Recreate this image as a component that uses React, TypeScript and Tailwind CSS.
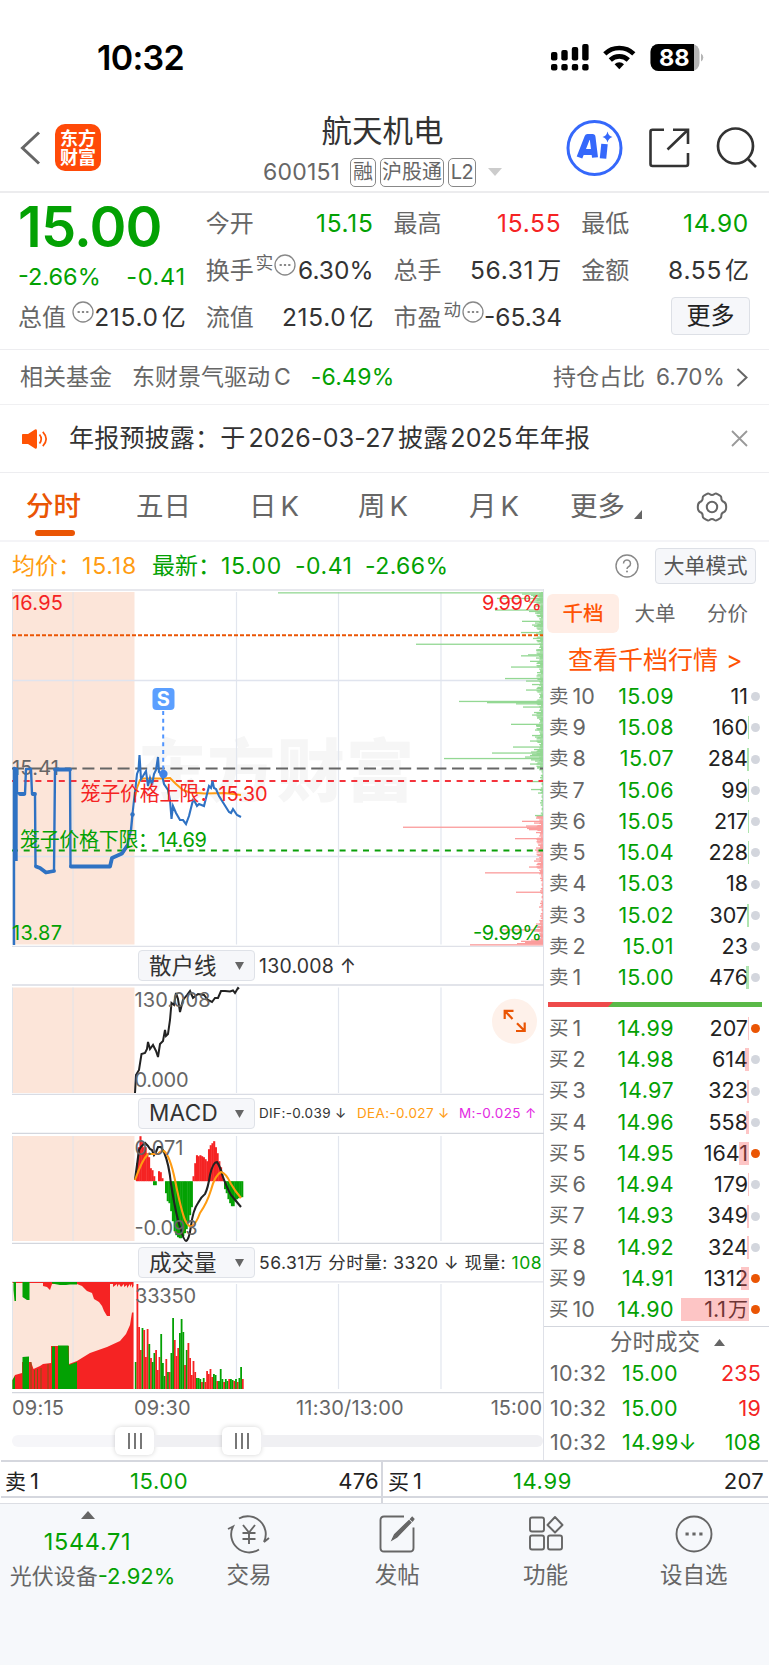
import { type ReactNode } from "react";
import clsx from "clsx";

type Side = "sell" | "buy";

interface Level {
    label: string;
    price: string;
    volume: string;
    bar: number;
    hot?: boolean;
}

const sells: Level[] = [
    { label: "10", price: "15.09", volume: "11", bar: 0 },
    { label: "9", price: "15.08", volume: "160", bar: 1 },
    { label: "8", price: "15.07", volume: "284", bar: 1.5 },
    { label: "7", price: "15.06", volume: "99", bar: 0.5 },
    { label: "6", price: "15.05", volume: "217", bar: 1 },
    { label: "5", price: "15.04", volume: "228", bar: 1 },
    { label: "4", price: "15.03", volume: "18", bar: 0 },
    { label: "3", price: "15.02", volume: "307", bar: 1.5 },
    { label: "2", price: "15.01", volume: "23", bar: 0 },
    { label: "1", price: "15.00", volume: "476", bar: 3 },
];

const buys: Level[] = [
    { label: "1", price: "14.99", volume: "207", bar: 1, hot: true },
    { label: "2", price: "14.98", volume: "614", bar: 4 },
    { label: "3", price: "14.97", volume: "323", bar: 2 },
    { label: "4", price: "14.96", volume: "558", bar: 3 },
    { label: "5", price: "14.95", volume: "1641", bar: 10, hot: true },
    { label: "6", price: "14.94", volume: "179", bar: 1 },
    { label: "7", price: "14.93", volume: "349", bar: 2 },
    { label: "8", price: "14.92", volume: "324", bar: 2 },
    { label: "9", price: "14.91", volume: "1312", bar: 8, hot: true },
    { label: "10", price: "14.90", volume: "1.1万", bar: 68, hot: true },
];

// [y, length] of the larger resting orders
const bigOrders: [number, number][] = [
    [592.8, 265], [594, 21], [595.2, 12], [596.4, 10], [598.4, 46], [600, 10], [602, 14], [606, 8], [610, 48], [611.4, 14], [613, 8],
    [621.3, 21], [623, 8], [625, 11], [626.2, 9], [632.5, 22], [634, 7], [638.4, 10], [644.2, 127], [650, 7], [654.8, 15], [655.8, 22],
    [658, 7], [661.3, 13], [667, 32], [672.6, 6], [678.5, 38], [681, 17], [684.5, 11], [690, 17], [701.4, 84], [702.6, 56], [703.8, 27],
    [707, 20], [712.5, 9], [715, 11], [718, 6], [724.3, 32], [725.6, 7], [730, 8], [735.5, 11], [737, 8], [741, 13], [747, 30], [749.5, 9],
    [752, 12], [753, 51], [754.2, 11], [755.5, 13], [757, 18], [758.5, 99], [759.8, 12], [761, 8], [764, 13], [768, 6], [781.5, 16],
    [789.5, 12], [793, 5], [815.5, 8], [818, 7], [821.3, 21], [823, 9], [826, 17], [827.2, 140], [828.4, 16], [829.6, 14], [832.5, 7],
    [838.6, 28], [840, 6], [845, 5], [848, 7], [850, 8], [859, 7], [861, 9], [864.5, 5], [867, 14], [872.8, 58], [892.2, 27], [907, 4],
    [924, 7], [929.8, 43], [931, 9], [940, 12], [941.3, 22], [942.6, 18], [943.6, 26], [944.8, 73],
];

const macdBars: [number, number[]][] = [
    [136, [18, 34, 45, 40, 34, 34, 28, 24, 13, 11, 5]],
    [153, [-4, -4]],
    [158, [10, 9, 3]],
    [165, [-12, -20, -22, -30, -40, -50, -54, -56, -57, -57, -55, -52, -48, -42, -34, -26]],
    [192.5, [5, 18, 26, 25, 26, 25, 24, 22, 20, 32, 36, 38, 40, 34, 28, 20, 14, 5]],
    [224, [-8, -12, -18, -22, -25, -25, -20, -18, -17, -16, -16]],
];

const volumeBars =
    "g27 r105 r62 r39 g61 r59 r32 r60 g45 r31 g27 g36 r39 r19 r32 g55 g26 g13 r30 g17 r17 g36 g71 r49 r33 r41 g56 g70 g57 r24 g39 r46 r31 r14 r28 r17 g11 g11 g10 r7 g11 r7 r18 r15 r20 r12 g15 g14 r8 g8 g20 g10 r7 g10 g8 r10 g10 g9 r8 g10 r7 g11 g22 r10".split(" ");

const GRID_X = [236.5, 338.5, 441];
const RED = "#f52323";
const GREEN = "#03a103";

function Grid({ top, bottom, pre = true }: { top: number; bottom: number; pre?: boolean }) {
    return (
        <g>
            {pre && <rect x={12.5} y={top} width={122} height={bottom - top} fill="#fce5d9" />}
            <path d={`M12.5 ${top}V${bottom}M73 ${top}V${bottom}`} stroke="#e0e4ea" />
            {GRID_X.map((x) => (
                <path key={x} d={`M${x} ${top}V${bottom}`} stroke="#e2e6ee" strokeWidth={1.2} />
            ))}
        </g>
    );
}

function Label({ x, y, w, color = "#666", end, children }: { x: number; y: number; w: number; color?: string; end?: boolean; children: ReactNode }) {
    return (
        <text x={x} y={y} fontSize={20} fill={color} textLength={w} textAnchor={end ? "end" : "start"}>
            {children}
        </text>
    );
}

function PriceChart() {
    const filler = Array.from({ length: 308 }, (_, i) => {
        const y = 592.5 + i * 1.143;
        const calm = y > 770 && y < 815 || y > 875 && y < 920;
        const n = (i * 7919 + i * i * 31) % 11;
        return [y, calm ? 0.6 + (n % 4) * 0.8 : 2 + (n % 6) * 0.9] as [number, number];
    });

    return (
        <svg className="block h-[358px] w-[533px]" viewBox="11 589 533 358">
            <text x={138} y={796} fontSize={68} fontWeight={900} fill="#f6f6f6" textLength={276}>东方财富</text>
            <Grid top={592} bottom={944.5} />
            <path d="M12 590H544M12 946.5H544" stroke="#dfe1e8" strokeWidth={1.5} />
            <path d="M12 680.5H543M12 856.5H543" stroke="#e0e4ee" strokeWidth={1.4} />
            {[...filler, ...bigOrders].map(([y, len], i) => (
                <rect key={i} x={543 - len} y={y - 0.6} width={len} height={1.3} fill={y < 816 ? "#93d893" : "#fb9c9c"} />
            ))}
            <path d="M12 635.3H543" stroke="#ea5504" strokeWidth={2} strokeDasharray="4 2" />
            <Label x={12} y={775} w={47}>15.41</Label>
            <path d="M12 768.4H543" stroke="#666" strokeWidth={2} strokeDasharray="12 5.6" />
            <path d="M12 781H543" stroke="#f4333c" strokeWidth={2} strokeDasharray="6 5.7" />
            <path d="M12 850.5H543" stroke="#0a9f0a" strokeWidth={2} strokeDasharray="6 5.7" />
            <polyline
                points="135,797 137,788 140,780 143,778.5 163,778.5 170,778 176,784 183,790 190,792.5 205,793.5 225,793 241,795"
                fill="none" stroke="#ff9c12" strokeWidth={2}
            />
            <path d="M16.2 768V861" stroke="#2f72c3" strokeWidth={3} />
            <polyline
                points="14,945 14,768 17,769 17,793 25,794 26,769 31,769 32,794 35,795 35.5,866 40,868 46,872.5 54,871 55,769.5 70,769.5 70.5,866.5 110,866.5 112,858 116,856.5 122,853.5 127,846 131,830 132.5,814"
                fill="none" stroke="#2f72c3" strokeWidth={2.4} strokeLinejoin="round"
            />
            <path d="M20 794H24M33 794H35M55 769.5H70M36 866.5L40 868L46 872.5L54 871M71 866.5H110L112 858L122 853.5L127 846" fill="none" stroke="#2f72c3" strokeWidth={3.8} strokeLinecap="round" strokeLinejoin="round" />
            <polyline
                points="132.5,814 134,800 135.5,788 137,774 138.5,770 139.5,755 141,779 143,776 146,771 148,786 150,778 152,785 154,774 156,770 158,757 159,772 162,775 164,784 168,790 170,800 171.5,819 173,806 176,813 180,820 183,820 186,824 189,816 191,808 193,800 195,802 197,806 199,804 204,806 207,794 209,786 211,788 212.5,781 214,788 216,789 219,796 224,804 229,812 231,813 233,809 237,815 241,817"
                fill="none" stroke="#2f72c3" strokeWidth={2.1}
            />
            <circle cx={132.5} cy={814.5} r={2.2} fill="#2f72c3" />
            <path d="M163.2 711V770" stroke="#4f94ff" strokeWidth={2} strokeDasharray="4 3.8" />
            <circle cx={163.4} cy={774} r={4.2} fill="#3f83e8" />
            <rect x={152.5} y={688} width={22} height={22} rx={4} fill="#5b9fff" />
            <text x={163.4} y={706} fontSize={20} fontWeight={700} fill="#fff" textAnchor="middle">S</text>
            <Label x={12} y={609.5} w={51} color={RED}>16.95</Label>
            <Label x={542} y={609.5} w={60} color={RED} end>9.99%</Label>
            <Label x={12} y={939.5} w={50} color={GREEN}>13.87</Label>
            <Label x={542} y={939.5} w={69} color={GREEN} end>-9.99%</Label>
            <Label x={80.5} y={800.5} w={187} color={RED}>笼子价格上限：15.30</Label>
            <Label x={20} y={846.5} w={187} color={GREEN}>笼子价格下限：14.69</Label>
        </svg>
    );
}

function RetailChart() {
    return (
        <svg className="block h-[111px] w-[533px]" viewBox="11 984 533 111">
            <Grid top={987.5} bottom={1093} />
            <path d="M12 985H544M12 1094.5H544" stroke="#d9dce4" strokeWidth={1.4} />
            <polyline
                points="135,1093 136,1075 139,1070 141.5,1054 145,1053 147,1049 148,1042 150,1049 153,1045 156,1051 158,1057 160,1044 163,1041 165,1030 166,1036 168,1034 170,1020 171.5,1003 174,1005 176,993 178,999 180,1012 183,1000 187,995 190,991 193,998 198,994 204,995 208,1000 212,1002 215,998 218,998 221,991 225,991 230,991.5 233,990.5 235,993 238,988 239,989"
                fill="none" stroke="#222" strokeWidth={2}
            />
            <Label x={134.5} y={1006.5} w={76}>130.008</Label>
            <Label x={134.5} y={1086.5} w={54}>0.000</Label>
            <circle cx={514.5} cy={1021.3} r={22.5} fill="#fef1ea" />
            <path d="M504.7 1019V1010.8H513.5M505 1011L512.5 1019M524.7 1022.5V1031H516M524.5 1030.8L517 1023.3" fill="none" stroke="#ea5504" strokeWidth={2.2} />
        </svg>
    );
}

function MacdChart() {
    return (
        <svg className="block h-[112px] w-[533px]" viewBox="11 1132 533 112">
            <Grid top={1136} bottom={1241} />
            <path d="M12 1133.4H544M12 1243.4H544" stroke="#d3d6dd" strokeWidth={1.3} />
            {macdBars.map(([start, heights]) =>
                heights.map((h, i) => (
                    <rect
                        key={`${start}-${i}`}
                        x={start + i * 1.72}
                        y={h > 0 ? 1181.2 - h : 1181.2}
                        width={2.1}
                        height={Math.abs(h)}
                        fill={h > 0 ? RED : GREEN}
                    />
                ))
            )}
            <path
                d="M135 1180L139 1150Q141 1146 145 1143L148 1146L150 1149L152 1150L154 1155L156 1152L158 1147H161L164 1152Q169 1164 171 1184Q176 1215 180 1227Q184 1241 186 1241Q189 1240 191 1226Q193 1210 198 1203Q201 1197 205 1194Q208 1188 210 1175Q213 1162 217 1162Q220 1166 223 1177Q227 1188 231 1195L236 1201L241 1207"
                fill="none" stroke="#222" strokeWidth={2.1}
            />
            <path
                d="M135 1180Q142 1160 148 1154H158Q160 1151 164 1151Q170 1156 175 1180Q181 1210 185 1220Q189 1228 192 1226Q196 1224 200 1213Q207 1203 211 1190Q215 1175 221 1172Q226 1173 231 1184Q235 1191 241 1198"
                fill="none" stroke="#ff9c12" strokeWidth={2.1}
            />
            <Label x={134.5} y={1154.5} w={49}>0.071</Label>
            <Label x={134.5} y={1235} w={63}>-0.093</Label>
        </svg>
    );
}

function VolumeChart() {
    return (
        <svg className="block h-[113px] w-[533px]" viewBox="11 1281 533 113">
            <rect x={12.5} y={1282} width={121.5} height={107} fill="#fce5d9" />
            <Grid top={1284} bottom={1389} pre={false} />
            <path d="M12 1281.8H544" stroke="#dfe1e8" strokeWidth={1.2} />
            <path d="M12 1392.6H544" stroke="#d3d6dd" strokeWidth={1.4} />
            <path d="M12.5 1282H133.5V1286L132 1288V1284L130 1287V1284L127 1288V1285L124 1287V1284L121 1287L119 1284L117 1287V1284L113 1287V1284H110V1316H107L104 1311L102 1306L99 1302L94 1299L92 1293L87 1291L82 1286L77 1284H52L50 1290L47 1287L43 1286V1283H12.5Z" fill={RED} />
            <path d="M13.5 1282H16V1301H14.5L13.5 1290ZM22.5 1282H29.5V1300H27L22.5 1297ZM52 1282H77V1284.5H70L66 1285H60L52 1283.5Z" fill={GREEN} />
            <path d="M12.5 1389V1380L15 1375L22 1373V1362H31L33.5 1369L40 1366L43 1364L51 1363V1346H69V1364L77 1361L90 1353L107 1347L120 1341L126 1334L130 1325L132 1312.5H133.5V1389Z" fill={RED} />
            <path d="M12.5 1389V1380L15 1376V1389ZM22.5 1389V1357L29 1356.5V1389ZM52 1389V1346.5H55V1389ZM58 1389V1345.5H68.5L69 1365L77 1362V1389Z" fill={GREEN} />
            <path d="M31 1389V1362M34.5 1389V1370M37.5 1389V1369M41 1389V1368M48 1389V1364" stroke="#7d5a10" strokeWidth={1} />
            {volumeBars.map((bar, i) => {
                const h = Number(bar.slice(1));
                return <rect key={i} x={134.8 + i * 1.7} y={1389 - h} width={1.8} height={h} fill={bar[0] === "r" ? RED : GREEN} />;
            })}
            <Label x={135} y={1303} w={61}>33350</Label>
        </svg>
    );
}

function IndicatorBar({ name, wide, children }: { name: string; wide?: boolean; children: ReactNode }) {
    return (
        <div className="flex h-[37px] items-center pl-[127px] leading-none">
            <div className="flex h-[31px] w-[117px] shrink-0 items-center justify-between rounded border border-[#dfe2e8] bg-[#f6f7fa] pr-[10px] pl-[10px] text-[#333]">
                <span className={clsx("text-[22.5px]", wide ? "tracking-[0.3px]" : "pt-[2px]")}>{name}</span>
                <svg width="9" height="8" viewBox="0 0 9 8"><path d="M0 0H9L4.5 8Z" fill="#666" /></svg>
            </div>
            <div className="flex items-center pl-[4px] whitespace-nowrap text-[#333]">{children}</div>
        </div>
    );
}

function Thumb() {
    return (
        <div className="flex h-[28px] w-[39px] items-center justify-center gap-[4px] rounded-md bg-white shadow-[0_0_5px_rgba(0,0,0,0.18)]">
            <i className="h-4 w-[2px] bg-[#777]" />
            <i className="h-4 w-[2px] bg-[#777]" />
            <i className="h-4 w-[2px] bg-[#777]" />
        </div>
    );
}

function LevelRow({ level, side }: { level: Level; side: Side }) {
    return (
        <div className="relative flex h-[31.25px] items-center pr-[9px] pl-[5px] text-[21.5px]">
            <span className="flex w-[60px] items-center gap-[4px] text-[#666]">
                <span className="text-[19.5px]">{side === "sell" ? "卖" : "买"}</span>
                {level.label}
            </span>
            <span className="w-[65px] text-right tracking-[0.4px] text-[#03a103]">{level.price}</span>
            <span className="w-[74px] text-right whitespace-nowrap text-[#222]">
                {level.volume.endsWith("万") ? <>{level.volume.slice(0, -1)}<span className="ml-[2px] text-[20px]">万</span></> : level.volume}
            </span>
            <span
                className={clsx("absolute top-1 right-[20.5px] h-[23px]", side === "sell" ? "bg-[#5fc95f]/50" : "bg-[#f95a5a]/35")}
                style={{ width: level.bar }}
            />
            <span className={clsx("ml-auto size-[9px] rounded-full", level.hot ? "bg-[#ea5504]" : "bg-[#d3d6dd]")} />
        </div>
    );
}

function More() {
    return (
        <svg className="mb-3 shrink-0" width="22" height="22" viewBox="0 0 22 22">
            <circle cx="11" cy="11" r="10" fill="none" stroke="#888" strokeWidth="1.3" />
            <path d="M5.6 11h2.2M9.9 11h2.2M14.2 11h2.2" stroke="#888" strokeWidth="2.2" />
        </svg>
    );
}

function Cell({ label, sup, dots, value, unit, color = "text-[#333]" }: { label: string; sup?: string; dots?: boolean; value: string; unit?: string; color?: string }) {
    return (
        <div className="flex h-[47px] items-center whitespace-nowrap">
            <span className="text-[24px] text-[#666]">{label}</span>
            {sup && <span className="mb-4 ml-[2px] text-[17.5px] text-[#666]">{sup}</span>}
            {dots && <span className={clsx("flex", sup ? "ml-px" : "ml-[6px]")}><More /></span>}
            <span className={clsx("ml-auto text-[24.5px]", color, !sup && "tracking-[0.7px]")}>{value}</span>
            {unit && <span className="ml-[3px] text-[24px] text-[#333]">{unit}</span>}
        </div>
    );
}

function StatusBar() {
    return (
        <div className="flex h-[107px] items-start pt-[42px] pl-[97px]">
            <span className="w-[450px] text-[34px] leading-[32px] font-semibold tracking-[-0.7px] text-black">10:32</span>
            <svg width="160" height="32" viewBox="548 42 160 32">
                {[[552, 52], [562.3, 50], [572.8, 47], [583.2, 44]].map(([x, y]) => (
                    <g key={x}>
                        <rect x={x} y={y} width={6.4} height={60.5 - y} rx={2} />
                        <rect x={x} y={64} width={6.4} height={6.5} rx={2} />
                    </g>
                ))}
                <path d="M605.8 53.8a21 21 0 0 1 29 0M611.3 60a13 13 0 0 1 18 0" fill="none" stroke="#000" strokeWidth="4.6" />
                <path d="M620.3 69.2L615.6 64.2a6.8 6.8 0 0 1 9.4 0Z" />
                <rect x={651.5} y={44} width={49} height={27} rx={8} fill="#b5b5b5" />
                <path d="M659.5 44H695V71H659.5a8 8 0 0 1-8-8V52a8 8 0 0 1 8-8Z" />
                <path d="M702 53.5a4.6 4.6 0 0 1 0 8Z" fill="#b5b5b5" />
                <text x={675.3} y={65.7} fontSize={23.5} fontWeight={700} fill="#fff" textAnchor="middle">88</text>
            </svg>
        </div>
    );
}

function Header() {
    return (
        <header className="flex h-[86px] items-center border-b-2 border-[#ececee] pb-[3px]">
            <svg className="ml-[19px]" width="22" height="36" viewBox="0 0 22 36"><path d="M20 2.5L3.5 18L20 33.5" fill="none" stroke="#666" strokeWidth="3" /></svg>
            <div className="ml-[14px] flex h-[47px] w-[46px] flex-col items-center justify-center rounded-[10px] bg-[#ff4a08] text-[18px] leading-[19px] font-bold text-white">
                <span>东方</span>
                <span>财富</span>
            </div>
            <div className="mt-[2px] ml-[162px] flex w-[241px] flex-col text-[#333]">
                <h1 className="mr-[2px] h-[47px] text-center text-[30.5px] leading-[42px]">航天机电</h1>
                <div className="flex h-[31px] items-center gap-[4px] text-[20px] leading-none text-[#666]">
                    <span className="mr-1 w-[79px] text-[23px] tracking-[0.2px]">600151</span>
                    <span className="flex h-[29px] w-[26px] items-center justify-center rounded-[5px] border-[1.5px] border-[#888]">融</span>
                    <span className="flex h-[29px] w-[64px] items-center justify-center rounded-[5px] border-[1.5px] border-[#888]">沪股通</span>
                    <span className="flex h-[29px] w-[28px] items-center justify-center rounded-[5px] border-[1.5px] border-[#888] tracking-[-0.5px]">L2</span>
                    <svg className="ml-[8px]" width="14" height="8" viewBox="0 0 14 8"><path d="M0 0H14L7 8Z" fill="#ccc" /></svg>
                </div>
            </div>
            <svg className="ml-[59px]" width="206" height="60" viewBox="563 118 206 60">
                <circle cx={594.5} cy={148} r={26.5} fill="#fff" stroke="#3568fb" strokeWidth={3} />
                <path d="M579.5 157.5L587.5 137H592.5L595 157.5M583 152H593" fill="none" stroke="#3568fb" strokeWidth={6} strokeLinejoin="round" />
                <path d="M604.500 144L603 158.500" stroke="#3568fb" strokeWidth={6.500} />
                <path d="M607.500 131.500Q608.500 136 612.500 137Q608.500 138 607.500 142.500Q606.500 138 602.500 137Q606.500 136 607.500 131.500Z" fill="#3568fb" />
                <path d="M664 129.8H652.5a2 2 0 0 0-2 2V164a2 2 0 0 0 2 2H686a2 2 0 0 0 2-2V153M673 129.8H688V144M688 129.8L667.5 149.5" fill="none" stroke="#333" strokeWidth={2.6} />
                <circle cx={735.5} cy={146} r={17.5} fill="none" stroke="#333" strokeWidth={2.7} />
                <path d="M747.5 158.5L756 167" stroke="#333" strokeWidth={2.7} />
            </svg>
        </header>
    );
}

function Quote() {
    return (
        <section className="grid h-[157px] grid-cols-4 gap-x-[20px] border-b border-[#ededf0] pt-[7px] pr-[20px] pl-[18px] leading-none">
            <div>
                <div className="flex h-[47px] items-center pt-[6px] text-[56px] font-semibold tracking-[-0.8px] text-[#03a103]">15.00</div>
                <div className="flex h-[47px] items-center justify-between pt-[12px] text-[23.5px] text-[#03a103]">
                    <span>-2.66%</span>
                    <span className="tracking-[0.7px]">-0.41</span>
                </div>
                <Cell label="总值" dots value="215.0" unit="亿" />
            </div>
            <div>
                <Cell label="今开" value="15.15" color="text-[#03a103]" />
                <Cell label="换手" sup="实" dots value="6.30%" />
                <Cell label="流值" value="215.0" unit="亿" />
            </div>
            <div>
                <Cell label="最高" value="15.55" color="text-[#f52323]" />
                <Cell label="总手" value="56.31" unit="万" />
                <Cell label="市盈" sup="动" dots value="-65.34" />
            </div>
            <div>
                <Cell label="最低" value="14.90" color="text-[#03a103]" />
                <Cell label="金额" value="8.55" unit="亿" />
                <div className="-mr-px flex h-[43px] items-center justify-end">
                    <button className="h-[38px] w-[79px] rounded border border-[#dde0e6] bg-[#f6f7fa] text-[24px] text-[#222]">更多</button>
                </div>
            </div>
        </section>
    );
}

function FundRow() {
    return (
        <div className="flex h-[55px] items-center border-b border-[#f0f0f2] pt-px pr-[21px] pl-[20px] text-[23px] leading-none text-[#666]">
            <span>相关基金</span>
            <span className="ml-[20px]">东财景气驱动<span className="ml-1">C</span></span>
            <span className="ml-[20px] tracking-[0.2px] text-[#03a103]">-6.49%</span>
            <span className="ml-auto">持仓占比</span>
            <span className="ml-[11px] text-[22.500px] tracking-[0.2px]">6.70%</span>
            <svg className="ml-[11px]" width="12" height="19" viewBox="0 0 12 19"><path d="M1.5 1L10.5 9.5L1.5 18" fill="none" stroke="#666" strokeWidth="2" /></svg>
        </div>
    );
}

function Notice() {
    return (
        <div className="flex h-[68px] items-center border-b border-[#ededf0] pr-[21px] pl-[22px] leading-none">
            <svg width="27" height="20" viewBox="0 0 27 20">
                <path d="M0 5.5Q0 5 1 5H6L13 0.5Q15 -0.5 15 2V18Q15 20.5 13 19.5L6 15H1Q0 15 0 14.5Z" fill="#ff5304" />
                <path d="M17.5 5.5Q21 10 17.5 14.5M20.8 2.8Q27.5 10 20.8 17.2" fill="none" stroke="#ff5304" strokeWidth="1.7" />
            </svg>
            <span className="ml-[20px] text-[25px] tracking-[0.2px] text-[#333]">
                年报预披露：于<span className="mx-[3px]">2026-03-27</span>披露<span className="mx-[2px]">2025</span>年年报
            </span>
            <svg className="ml-auto" width="17" height="17" viewBox="0 0 17 17"><path d="M1 1L16 16M16 1L1 16" stroke="#999" strokeWidth="1.8" /></svg>
        </div>
    );
}

function Tabs() {
    return (
        <nav className="flex h-[69px] items-center border-b-2 border-[#f4f4f7] pr-[41px] pl-[26px] text-[27.5px] leading-none text-[#666]">
            <div className="relative w-[110px] font-medium text-[#ea5504]">
                分时
                <i className="absolute top-[37px] left-[9px] h-[6px] w-[40px] rounded-[3px] bg-[#ea5504]" />
            </div>
            <div className="w-[113px]">五日</div>
            <div className="w-[109px]">日<span className="ml-[4px]">K</span></div>
            <div className="w-[111px]">周<span className="ml-[4px]">K</span></div>
            <div className="w-[101px]">月<span className="ml-[4px]">K</span></div>
            <div className="flex items-end">
                更多
                <svg className="mb-px ml-[9px]" width="8" height="9" viewBox="0 0 8 9"><path d="M8 0V9H0Z" fill="#666" /></svg>
            </div>
            <svg className="ml-auto" width="32" height="32" viewBox="0 0 32 32" fill="none" stroke="#666" strokeWidth="2" strokeLinejoin="round">
                <path d="M10.5 3.2Q12 2 13.5 3Q16 5 18.500 3Q20 2 21.500 3.200L24 4.600Q25.500 5.500 25.300 7.300Q25.300 10 28 11Q30.200 12 30.200 16Q30.200 20 28 21Q25.300 22 25.300 24.700Q25.500 26.500 24 27.400L21.500 28.800Q20 30 18.500 29Q16 27 13.500 29Q12 30 10.500 28.800L8 27.400Q6.500 26.500 6.700 24.700Q6.700 22 4 21Q1.800 20 1.800 16Q1.800 12 4 11Q6.700 10 6.700 7.300Q6.500 5.500 8 4.600Z" />
                <circle cx="16" cy="16" r="5.2" />
            </svg>
        </nav>
    );
}

function AverageRow() {
    return (
        <div className="flex h-[47px] items-center pr-[13px] pl-[12px] text-[23px] leading-none text-[#03a103]">
            <span className="w-[70px] pt-[2px] whitespace-nowrap text-[#ff9c12]">均价：</span>
            <span className="w-[70px] pt-px tracking-[0.8px] text-[#ff9c12]">15.18</span>
            <span className="w-[69px] pt-[2px] whitespace-nowrap">最新：</span>
            <span className="w-[74px] pt-px tracking-[0.6px]">15.00</span>
            <span className="w-[70px] pt-px tracking-[0.5px]">-0.41</span>
            <span className="pt-px tracking-[0.4px]">-2.66%</span>
            <svg className="ml-auto" width="24" height="24" viewBox="0 0 24 24">
                <circle cx="12" cy="12" r="11" fill="none" stroke="#888" strokeWidth="1.4" />
                <path d="M8.500 9.500a3.500 3.500 0 1 1 5.300 3Q12 13.500 12 15" fill="none" stroke="#888" strokeWidth="1.5" />
                <circle cx="12" cy="17.500" r="1" fill="#888" />
            </svg>
            <button className="ml-[16px] h-[36px] w-[101px] rounded border border-[#dde0e6] bg-[#f6f7fa] text-[21px] text-[#555]">大单模式</button>
        </div>
    );
}

function Trade({ price, volume, up }: { price: string; volume: string; up?: boolean }) {
    return (
        <div className="flex h-[34.3px] items-center pr-[8px] pl-[6px] text-[21.5px]">
            <span className="w-[72px] tracking-[0.3px] text-[#666]">10:32</span>
            <span className="tracking-[0.4px] text-[#03a103]">{price}</span>
            <span className={clsx("ml-auto tracking-[0.2px]", up ? "text-[#f52323]" : "text-[#03a103]")}>{volume}</span>
        </div>
    );
}

function OrderBook() {
    return (
        <aside className="w-[225px] leading-none">
            <div className="mt-[2px] flex h-[45px] items-center pl-[3px] text-[20.500px] text-[#666]">
                <span className="flex h-[39px] w-[72px] items-center justify-center rounded-md bg-[#ffede5] pt-px font-medium text-[#ff5304]">千档</span>
                <span className="flex w-[72px] justify-center pt-px">大单</span>
                <span className="flex w-[73px] justify-center pt-px">分价</span>
            </div>
            <div className="flex h-[45px] items-center pt-[3px] pl-[24px] text-[25px] text-[#ff5304]">查看千档行情<span className="ml-[8px]">&gt;</span></div>
            {sells.map((level) => <LevelRow key={level.label} level={level} side="sell" />)}
            <div className="flex h-[19.500px] items-center pt-[3px] pl-[4px]">
                <svg width="214" height="5" viewBox="0 0 214 5">
                    <rect width="214" height="5" fill="#5ab948" />
                    <path d="M0 0H65L60 5H0Z" fill="#ee4a4a" />
                </svg>
            </div>
            {buys.map((level) => <LevelRow key={level.label} level={level} side="buy" />)}
            <div className="flex h-[31.500px] items-center border-t border-[#d3d6dd] pt-px pl-[66px] text-[22.500px] text-[#666]">
                分时成交
                <svg className="ml-[14px]" width="11" height="7" viewBox="0 0 11 7"><path d="M0 7H11L5.500 0Z" fill="#666" /></svg>
            </div>
            <Trade price="15.00" volume="235" up />
            <Trade price="15.00" volume="19" up />
            <Trade price="14.99↓" volume="108" />
        </aside>
    );
}

function Charts() {
    return (
        <div className="h-[871px] w-[544px] border-r border-[#dfe1e8] pl-[11px]">
            <PriceChart />
            <IndicatorBar name="散户线">
                <span className="pt-[2px] text-[19.500px] tracking-[0.2px]">130.008 ↑</span>
            </IndicatorBar>
            <RetailChart />
            <IndicatorBar name="MACD" wide>
                <span className="w-[98px] text-[13.500px] tracking-[0.350px]">DIF:-0.039 ↓</span>
                <span className="w-[102px] text-[13.500px] tracking-[0.350px] text-[#ff9c12]">DEA:-0.027 ↓</span>
                <span className="text-[13.500px] tracking-[0.350px] text-[#e32be3]">M:-0.025 ↑</span>
            </IndicatorBar>
            <MacdChart />
            <IndicatorBar name="成交量">
                <span className="text-[17.500px] tracking-[0.500px]">56.31万 分时量: 3320 ↓ 现量: <span className="text-[#03a103]">108</span></span>
            </IndicatorBar>
            <VolumeChart />
            <div className="flex h-[28px] items-center justify-between pr-[1px] pl-[1px] text-[20px] leading-none text-[#666]">
                <span className="w-[122px] tracking-[0.2px]">09:15</span>
                <span className="w-[162px] tracking-[0.2px]">09:30</span>
                <span className="flex-1 tracking-[0.2px]">11:30/13:00</span>
                <span>15:00</span>
            </div>
            <div className="flex h-[37px] items-center pl-[1px]">
                <i className="h-3 w-[103px] rounded-l-full bg-[#f6f6f9]" />
                <Thumb />
                <i className="h-3 w-[68px] bg-[#f0f0f3]" />
                <Thumb />
                <i className="h-3 flex-1 rounded-r-full bg-[#f0f0f3]" />
            </div>
        </div>
    );
}

function BestRow() {
    return (
        <div className="mx-px h-[43px] border-t-2 border-[#d5d7de] text-[22px] leading-none text-[#222]">
            <div className="flex h-full">
                <div className="w-[382px] border-r-2 border-[#d5d7de]">
                    <div className="flex h-[36px] items-center border-b-2 border-[#d5d7de] pt-[3px] pr-[2px] pl-[4px]">
                        <span className="w-[125px]"><span className="mr-[4px] text-[21px]">卖</span>1</span>
                        <span className="tracking-[0.6px] text-[#03a103]">15.00</span>
                        <span className="ml-auto tracking-[0.3px]">476</span>
                    </div>
                </div>
                <div className="flex-1">
                    <div className="flex h-[36px] items-center border-b-2 border-[#d5d7de] pt-[3px] pr-[4px] pl-[5px]">
                        <span className="w-[125px]"><span className="mr-[4px] text-[21px]">买</span>1</span>
                        <span className="tracking-[0.6px] text-[#03a103]">14.99</span>
                        <span className="ml-auto tracking-[0.3px]">207</span>
                    </div>
                </div>
            </div>
        </div>
    );
}

function NavItem({ label, children }: { label: string; children: ReactNode }) {
    return (
        <div className="flex flex-1 flex-col items-center pt-[10px]">
            <svg width="44" height="40" viewBox="0 0 44 40" fill="none" stroke="#666" strokeWidth="1.9">{children}</svg>
            <span className="mt-[10px] text-[22.500px]">{label}</span>
        </div>
    );
}

function BottomNav() {
    return (
        <footer className="flex flex-1 border-t border-[#dcdee4] bg-[#f6f8fb] pr-px leading-none text-[#666]">
            <div className="flex w-[175px] flex-col items-center pt-[7px]">
                <svg width="14" height="8" viewBox="0 0 14 8"><path d="M0 8H14L7 0Z" fill="#666" /></svg>
                <span className="mt-[11px] text-[23.500px] tracking-[0.700px] text-[#03a103]">1544.71</span>
                <span className="mt-[11px] pl-[10px] text-[22px] whitespace-nowrap">光伏设备<span className="text-[#03a103]">-2.92%</span></span>
            </div>
            <NavItem label="交易">
                <path d="M12 4.500A18 18 0 0 1 37 28L42 24M32 35.500A18 18 0 0 1 6 12.500L1 15" />
                <path d="M16 11L22 18.500L28 11M15.500 19H28.500M15.500 25H28.500M22 18.500V30" />
            </NavItem>
            <NavItem label="发帖">
                <path d="M29 2.500H9Q5.500 2.500 5.500 6V34Q5.500 37.500 9 37.500H35Q38.500 37.500 38.500 34V13.500" />
                <path d="M37.200 3.200L39 5L37.500 7.200L35.400 5.200ZM34 6.500L36 8.500L22 23L17 26L19.500 20.500Z" fill="#666" stroke="#666" strokeWidth="1.200" />
            </NavItem>
            <NavItem label="功能">
                <rect x="6" y="3.500" width="14" height="14" rx="2" />
                <rect x="6" y="21.500" width="14" height="14" rx="2" />
                <rect x="24" y="21.500" width="14" height="14" rx="2" />
                <path d="M31 3L38.500 11L31 18.500L23.500 11Z" strokeLinejoin="round" />
            </NavItem>
            <NavItem label="设自选">
                <circle cx="22" cy="20" r="17.500" />
                <path d="M13.500 20h3.200M20.400 20h3.200M27.300 20h3.200" strokeWidth="3.200" />
            </NavItem>
        </footer>
    );
}

export default function App() {
    return (
        <div className="flex h-[1665px] w-[769px] flex-col overflow-hidden bg-white font-['Inter','Noto_Sans_CJK_SC',sans-serif]">
            <StatusBar />
            <Header />
            <Quote />
            <FundRow />
            <Notice />
            <Tabs />
            <AverageRow />
            <main className="flex h-[871px]">
                <Charts />
                <OrderBook />
            </main>
            <BestRow />
            <BottomNav />
        </div>
    );
}
